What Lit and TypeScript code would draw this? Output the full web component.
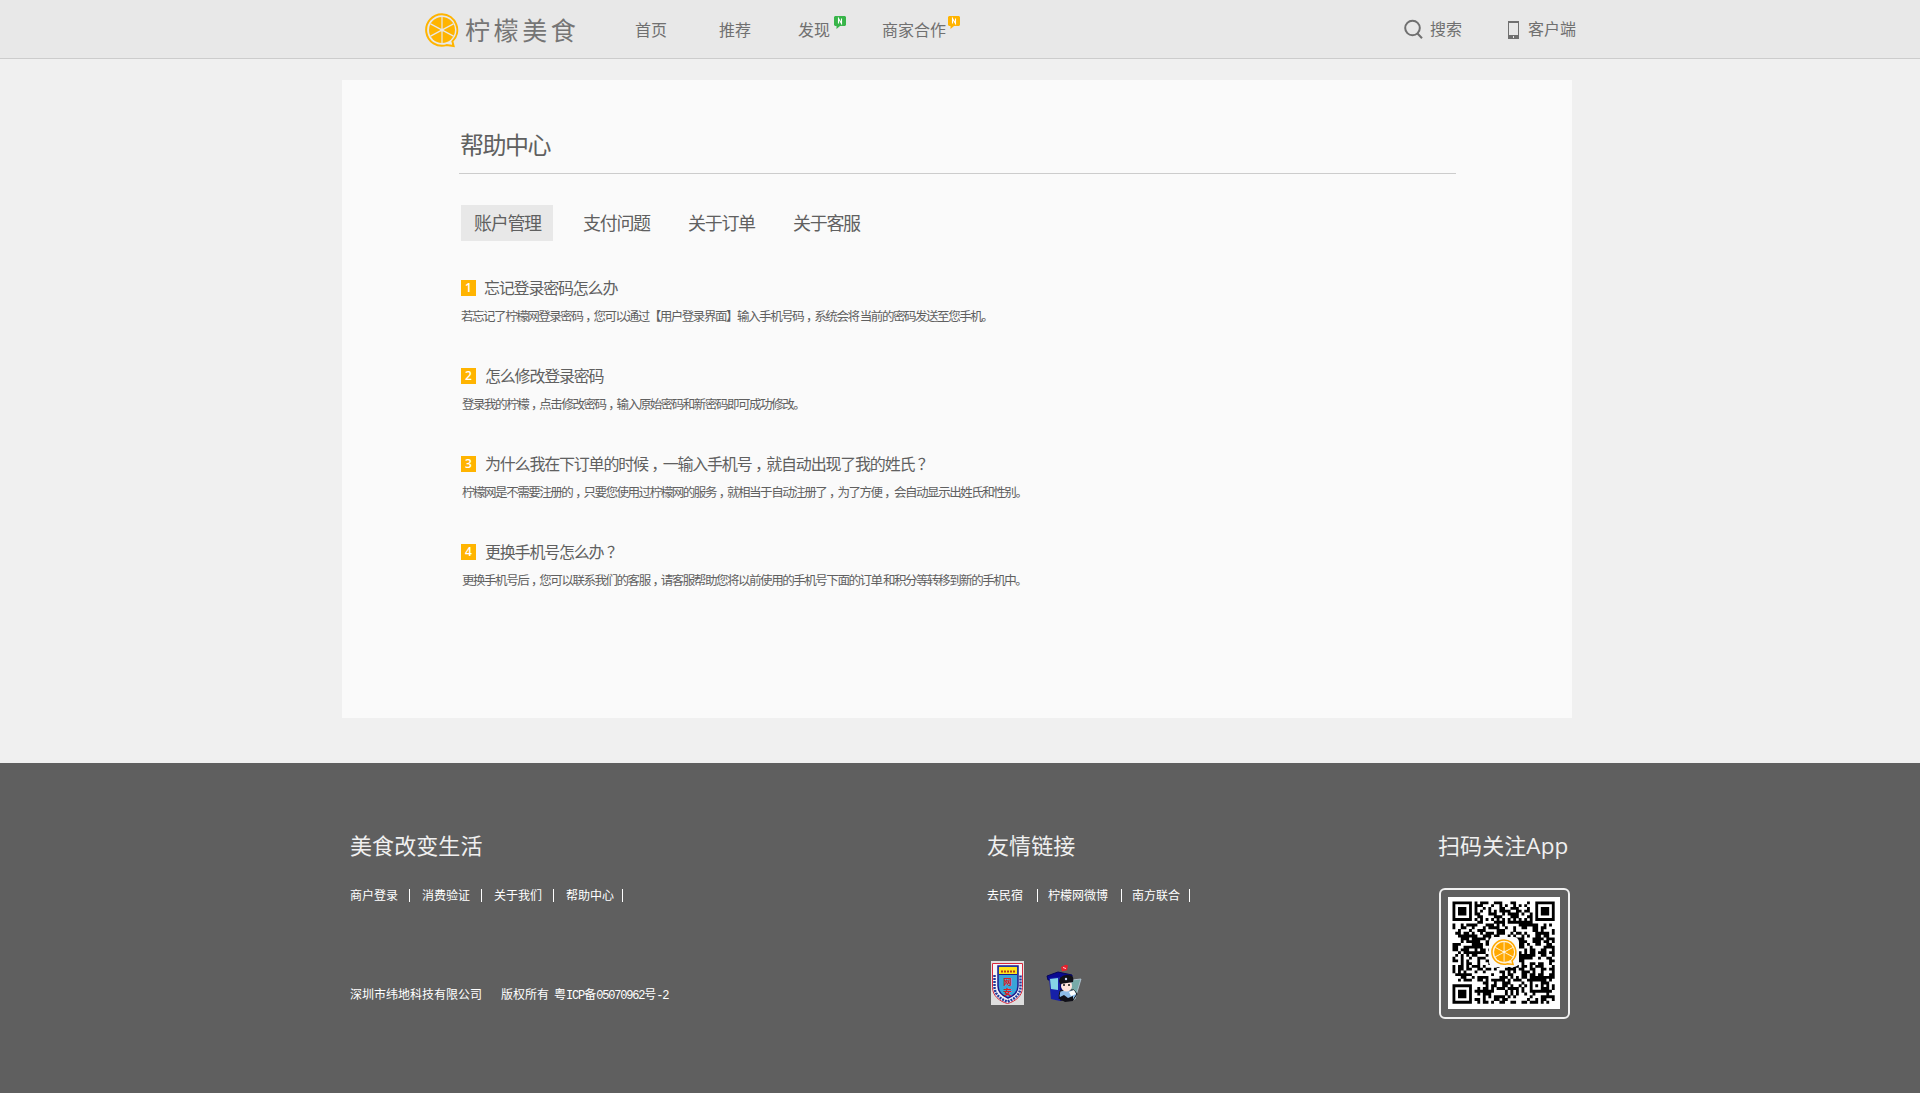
import { LitElement, html, css, svg } from "lit";
import { customElement, property } from "lit/decorators.js";

const lemonSlices = (peel: string, flesh: string, line: string) => svg`
  <path d="M17 1.2a15.8 15.8 0 1 0 4.6 30.9l7 .9-1.2-4.6A15.8 15.8 0 0 0 17 1.2z" fill="${line}" stroke="${peel}" stroke-width="2"/>
  <circle cx="17" cy="17" r="13" fill="${flesh}"/>
  ${[28, 90, 152].map(
    (a) => svg`<line x1="4" y1="17" x2="30" y2="17" stroke="${line}" stroke-width="1.2" transform="rotate(${a} 17 17)"/>`
  )}
  <circle cx="17" cy="17" r="1.6" fill="${line}"/>`;

interface Faq { title: string; body: string; }

const FAQS: Faq[] = [
  { title: "忘记登录密码怎么办", body: "若忘记了柠檬网登录密码，您可以通过【用户登录界面】输入手机号码，系统会将 当前的密码发送至您手机。" },
  { title: "怎么修改登录密码", body: "登录我的柠檬，点击修改密码，输入原始密码和新密码即可成功修改。" },
  { title: "为什么我在下订单的时候，一输入手机号，就自动出现了我的姓氏？", body: "柠檬网是不需要注册的，只要您使用过柠檬网的服务，就相当于自动注册了，为了方便， 会自动显示出姓氏和性别。" },
  { title: "更换手机号怎么办？", body: "更换手机号后，您可以联系我们的客服，请客服帮助您将以前使用的手机号下面的订单 和积分等转移到新的手机中。" },
];

/* Commas and question marks sit toward the middle of their em box. */
const punctuate = (text: string) =>
  text.split(/([，？])/).map((part) => (part === "，" || part === "？" ? html`<span class="mark">${part}</span>` : part));

@customElement("news-flag")
export class NewsFlag extends LitElement {
  @property() color = "#39b54a";
  static styles = css`
    :host { display: block; width: 12px; height: 14px; }
    svg { display: block; }
  `;
  render() {
    return html`<svg width="12" height="14" viewBox="0 0 12 14">
      <path d="M1 0h10l1 1v8l-1 1H6l-3.500 3V10H1L0 9V1z" fill="${this.color}"/>
      <path d="M4.500 7.500v-5l3 5v-5" fill="none" stroke="#fff" stroke-width="1.100"/>
    </svg>`;
  }
}

@customElement("site-header")
export class SiteHeader extends LitElement {
  static styles = css`
    :host { display: flex; box-sizing: border-box; height: 59px; background: #e8e8e8; border-bottom: 1px solid #ccc;
      padding-left: 425px; color: #707070; font-size: 16px; line-height: 24px; white-space: nowrap; }
    .logo { display: flex; width: 210px; padding-top: 13px; }
    .logo svg { flex: none; }
    .name { margin-left: 6px; font-size: 25px; line-height: 32px; letter-spacing: 3.6px; font-weight: 400; color: #757575; }
    nav { display: flex; padding-top: 17px; width: 769px; }
    .item { display: flex; position: relative; }
    .i0 { width: 84px; } .i1 { width: 79px; } .i2 { width: 84px; }
    news-flag { position: absolute; top: -1px; left: 36px; }
    .i3 news-flag { left: 66px; }
    .tools { display: flex; padding-top: 16px; }
    .tool { display: flex; }
    .search { width: 104px; }
    .search svg { margin: 3px 6px 0 0; }
    .client svg { margin: 5px 9px 0 0; }
  `;
  render() {
    return html`
      <div class="logo">
        <svg width="34" height="35" viewBox="0 0 34 35">${lemonSlices("#ffb400", "#ffb400", "#e8e8e8")}</svg>
        <span class="name">柠檬美食</span>
      </div>
      <nav>
        <div class="item i0">首页</div>
        <div class="item i1">推荐</div>
        <div class="item i2">发现<news-flag color="#39b54a"></news-flag></div>
        <div class="item i3">商家合作<news-flag color="#ffb400"></news-flag></div>
      </nav>
      <div class="tools">
        <div class="tool search">
          <svg width="20" height="21" viewBox="0 0 20 21" fill="none" stroke="#707070" stroke-width="2"><circle cx="8.500" cy="9" r="7.300"/><path d="M13.500 14.500l4.500 4.700"/></svg>搜索
        </div>
        <div class="tool client">
          <svg width="11" height="18" viewBox="0 0 11 18"><path d="M0 0h11v18H0zM1 2v12h9V2z" fill="#707070" fill-rule="evenodd"/><rect x="5" y="15" width="1" height="2" fill="#e8e8e8"/></svg>客户端
        </div>
      </div>`;
  }
}

@customElement("help-panel")
export class HelpPanel extends LitElement {
  static styles = css`
    :host { display: block; box-sizing: border-box; width: 1230px; height: 638px; margin: 21px 0 45px 342px; background: #fafafa;
      padding: 47px 116px 0 117px; color: #606060; white-space: nowrap; }
    h1 { margin: 0; padding-left: 1px; box-sizing: border-box; height: 47px; font-size: 24px; line-height: 34px; font-weight: 400;
      letter-spacing: -1.5px; border-bottom: 1px solid #ccc; }
    .tabs { display: flex; margin: 31px 0 0 2px; }
    .tab { box-sizing: border-box; height: 36px; padding-left: 13px; width: 105px; font-size: 18px; line-height: 34px; letter-spacing: -1.3px; }
    .tab.on { width: 92px; margin-right: 17px; background: #e8e8e8; }
    .list { padding: 36px 0 0 2px; }
    .faq { height: 88px; }
    .head { display: flex; align-items: center; height: 22px; }
    .num { width: 15px; height: 16px; margin-right: 8px; background: #ffb400; color: #fff; font: 600 12px/16px "Open Sans", "Noto Sans", sans-serif; text-align: center; }
    .title { height: 22px; font-size: 16px; line-height: 20px; letter-spacing: -1.2px; }
    .body { font-size: 12.5px; line-height: 18px; margin-top: 8px; letter-spacing: -1.46px; }
    .faq:not(:first-child) .num { margin-right: 9px; }
    .faq:not(:first-child) .body { padding-left: 1px; }
    .mark { margin: 0 -.22em 0 .22em; }
  `;
  render() {
    return html`
      <h1>帮助中心</h1>
      <div class="tabs">
        ${["账户管理", "支付问题", "关于订单", "关于客服"].map((t, i) => html`<div class="tab ${i === 0 ? "on" : ""}">${t}</div>`)}
      </div>
      <div class="list">
        ${FAQS.map((f, i) => html`
          <div class="faq">
            <div class="head"><span class="num">${i + 1}</span><span class="title">${punctuate(f.title)}</span></div>
            <div class="body">${punctuate(f.body)}</div>
          </div>`)}
      </div>`;
  }
}

/* Module grid: finder, timing and alignment marks plus a deterministic fill. */
const SIZE = 37;
function qrPath(): string {
  let seed = 20711;
  const rand = () => ((seed = (seed * 1103515245 + 12345) % 2147483648) / 2147483648);
  const ring = (r: number, c: number, half: number) => Math.max(Math.abs(r), Math.abs(c)) <= half
    ? Math.max(Math.abs(r), Math.abs(c)) : -1;
  let d = "";
  for (let r = 0; r < SIZE; r++) {
    for (let c = 0; c < SIZE; c++) {
      let on = rand() < 0.52;
      if (r === 6 || c === 6) on = (r + c) % 2 === 0;
      const a = ring(r - 30, c - 30, 2);
      if (a >= 0) on = a !== 1;
      for (const [fr, fc] of [[3, 3], [3, 33], [33, 3]]) {
        const f = ring(r - fr, c - fc, 4);
        if (f >= 0) on = f !== 2 && f !== 4;
      }
      if (on) d += `M${c} ${r}h1.03v1.03h-1.03z`;
    }
  }
  return d;
}

@customElement("qr-card")
export class QrCard extends LitElement {
  static styles = css`
    :host { display: block; box-sizing: border-box; width: 131px; height: 131px; border: 2px solid #f0f0f0; border-radius: 6px;
      padding: 7px; }
    svg { display: block; }
  `;
  render() {
    return html`<svg width="112" height="112" viewBox="0 0 112 112">
      <rect width="112" height="112" fill="#fff"/>
      <g transform="translate(4.500 4.500) scale(2.76)"><path d="${qrPath()}" fill="#000"/></g>
      <rect x="41" y="40" width="30" height="30" rx="5" fill="#fafafa"/>
      <g transform="translate(43 42) scale(.77)">${lemonSlices("#ffa800", "#ffa800", "#fff4dd")}</g>
    </svg>`;
  }
}

@customElement("site-footer")
export class SiteFooter extends LitElement {
  static styles = css`
    :host { display: flex; box-sizing: border-box; height: 330px; background: #5f5f5f; padding: 65px 0 0 350px; color: #f0f0f0; white-space: nowrap; }
    h2 { margin: 0; height: 53px; font-size: 22px; line-height: 33px; font-weight: 400; letter-spacing: .08px; }
    .about { width: 637px; }
    .links { width: 452px; }
    .row { display: flex; align-items: center; height: 28px; font-size: 12px; line-height: 28px; color: #fff; }
    .row i { width: 1px; height: 13px; background: #fff; margin: 0 12px 0 11px; }
    .about .row i:last-child { margin: 0 0 0 8px; }
    .links .row i { margin: 0 10px 0 14px; }
    .links .row i + i, .links .row i:nth-of-type(2) { margin-left: 13px; }
    .links .row i:last-child { margin: 0 0 0 9px; }
    .copy { display: flex; align-items: baseline; margin-top: 72px; font-size: 12px; line-height: 26px; color: #fff; }
    .copy span { margin-right: 19px; }
    .copy .own { margin-right: 5px; }
    .copy .icp { font-family: "Liberation Mono", "Noto Sans CJK SC", monospace; letter-spacing: -1.18px; }
    .copy .icp b { font-weight: 400; letter-spacing: 0; }
    .seals { display: flex; margin: 52px 0 0 4px; gap: 22px; }
    .app h2 { height: 60px; margin-left: -1px; }
    .app h2 span { font-family: "Open Sans", sans-serif; font-size: 22.5px; }
  `;
  render() {
    return html`
      <section class="about">
        <h2>美食改变生活</h2>
        <div class="row">商户登录<i></i>消费验证<i></i>关于我们<i></i>帮助中心<i></i></div>
        <div class="copy"><span>深圳市纬地科技有限公司</span><span class="own">版权所有</span><span class="icp"><b>粤</b>ICP<b>备</b>05070962<b>号</b>-2</span></div>
      </section>
      <section class="links">
        <h2>友情链接</h2>
        <div class="row">去民宿<i></i>柠檬网微博<i></i>南方联合<i></i></div>
        <div class="seals">
          <svg width="33" height="44" viewBox="0 0 33 44">
            <rect width="33" height="44" fill="#dedede"/>
            <path d="M1.500 2.500h30v24c0 8-7 14-15 16-8-2-15-8-15-16z" fill="#f4f4f8" stroke="#d8283c"/>
            <path d="M3.500 14v12c0 7 6 12.500 13 14.500 7-2 13-7.500 13-14.500V14" fill="none" stroke="#223a9a" stroke-width="2.500" stroke-dasharray="2 1"/>
            <path d="M7 5h20v20c0 6-5 10-10 12-5-2-10-6-10-12z" fill="#3aa5d8" stroke="#1a1a8c" stroke-width="1.500"/>
            <path d="M8 6h18v7H8z" fill="#ffe619"/><path d="M10 10.500h14" stroke="#b63a1c" stroke-width="2" stroke-dasharray="2 1"/>
            <path d="M8 13.500h18" stroke="#1a1a8c"/>
            <text x="16.500" y="24" text-anchor="middle" font-size="8.500" font-weight="700" fill="#e02020">网</text>
            <text x="16.500" y="33.500" text-anchor="middle" font-size="8.500" font-weight="700" fill="#e02020">安</text>
          </svg>
          <svg width="37" height="44" viewBox="0 0 37 44">
            <path d="M15 6l3-1.500 1-.8 3 .5-1 5-5 1z" fill="#e8202c"/><path d="M17 6.500l3 1" stroke="#fff" stroke-width=".8"/>
            <path d="M1 15l11-4 14 3v3l-24 2z" fill="#0a0a90" stroke="#05055a"/>
            <path d="M3 17l11-1v24l-9-2z" fill="#1620a8"/><path d="M14 16h9v22l-9 2z" fill="#070b70"/>
            <path d="M4 18l8-1v12l-7-1z" fill="#84d4e6"/>
            <path d="M26 19l9-1-6 20-6 1z" fill="#77aaa8" stroke="#bcd" stroke-width=".8"/>
            <path d="M14 30l6-1h8l3 4-4 6H15l-2-4z" fill="#8ebce6" stroke="#111"/>
            <circle cx="20.500" cy="25" r="5.500" fill="#ffe5dd"/>
            <path d="M13 20c1-5 5-6 9-6 5 0 6 3 5 7l-6 1-7 1z" fill="#101018"/><circle cx="20" cy="18" r="1.200" fill="#c8d8ff"/>
            <path d="M17 24h2m3 0h2" stroke="#111" stroke-width="1.300"/>
            <path d="M12 37l6-3 4 3 5-2v5l-8 1z" fill="#101018"/><path d="M23 31l5-2 2 4-5 2z" fill="#fff"/>
          </svg>
        </div>
      </section>
      <section class="app">
        <h2>扫码关注<span>App</span></h2>
        <qr-card></qr-card>
      </section>`;
  }
}

@customElement("app-root")
export class AppRoot extends LitElement {
  static styles = css`
    :host { display: flow-root; width: 1920px; height: 1093px; overflow: hidden; background: #f0f0f0;
      font-family: "Noto Sans CJK SC", sans-serif; }
  `;
  render() {
    return html`<site-header></site-header><help-panel></help-panel><site-footer></site-footer>`;
  }
}
